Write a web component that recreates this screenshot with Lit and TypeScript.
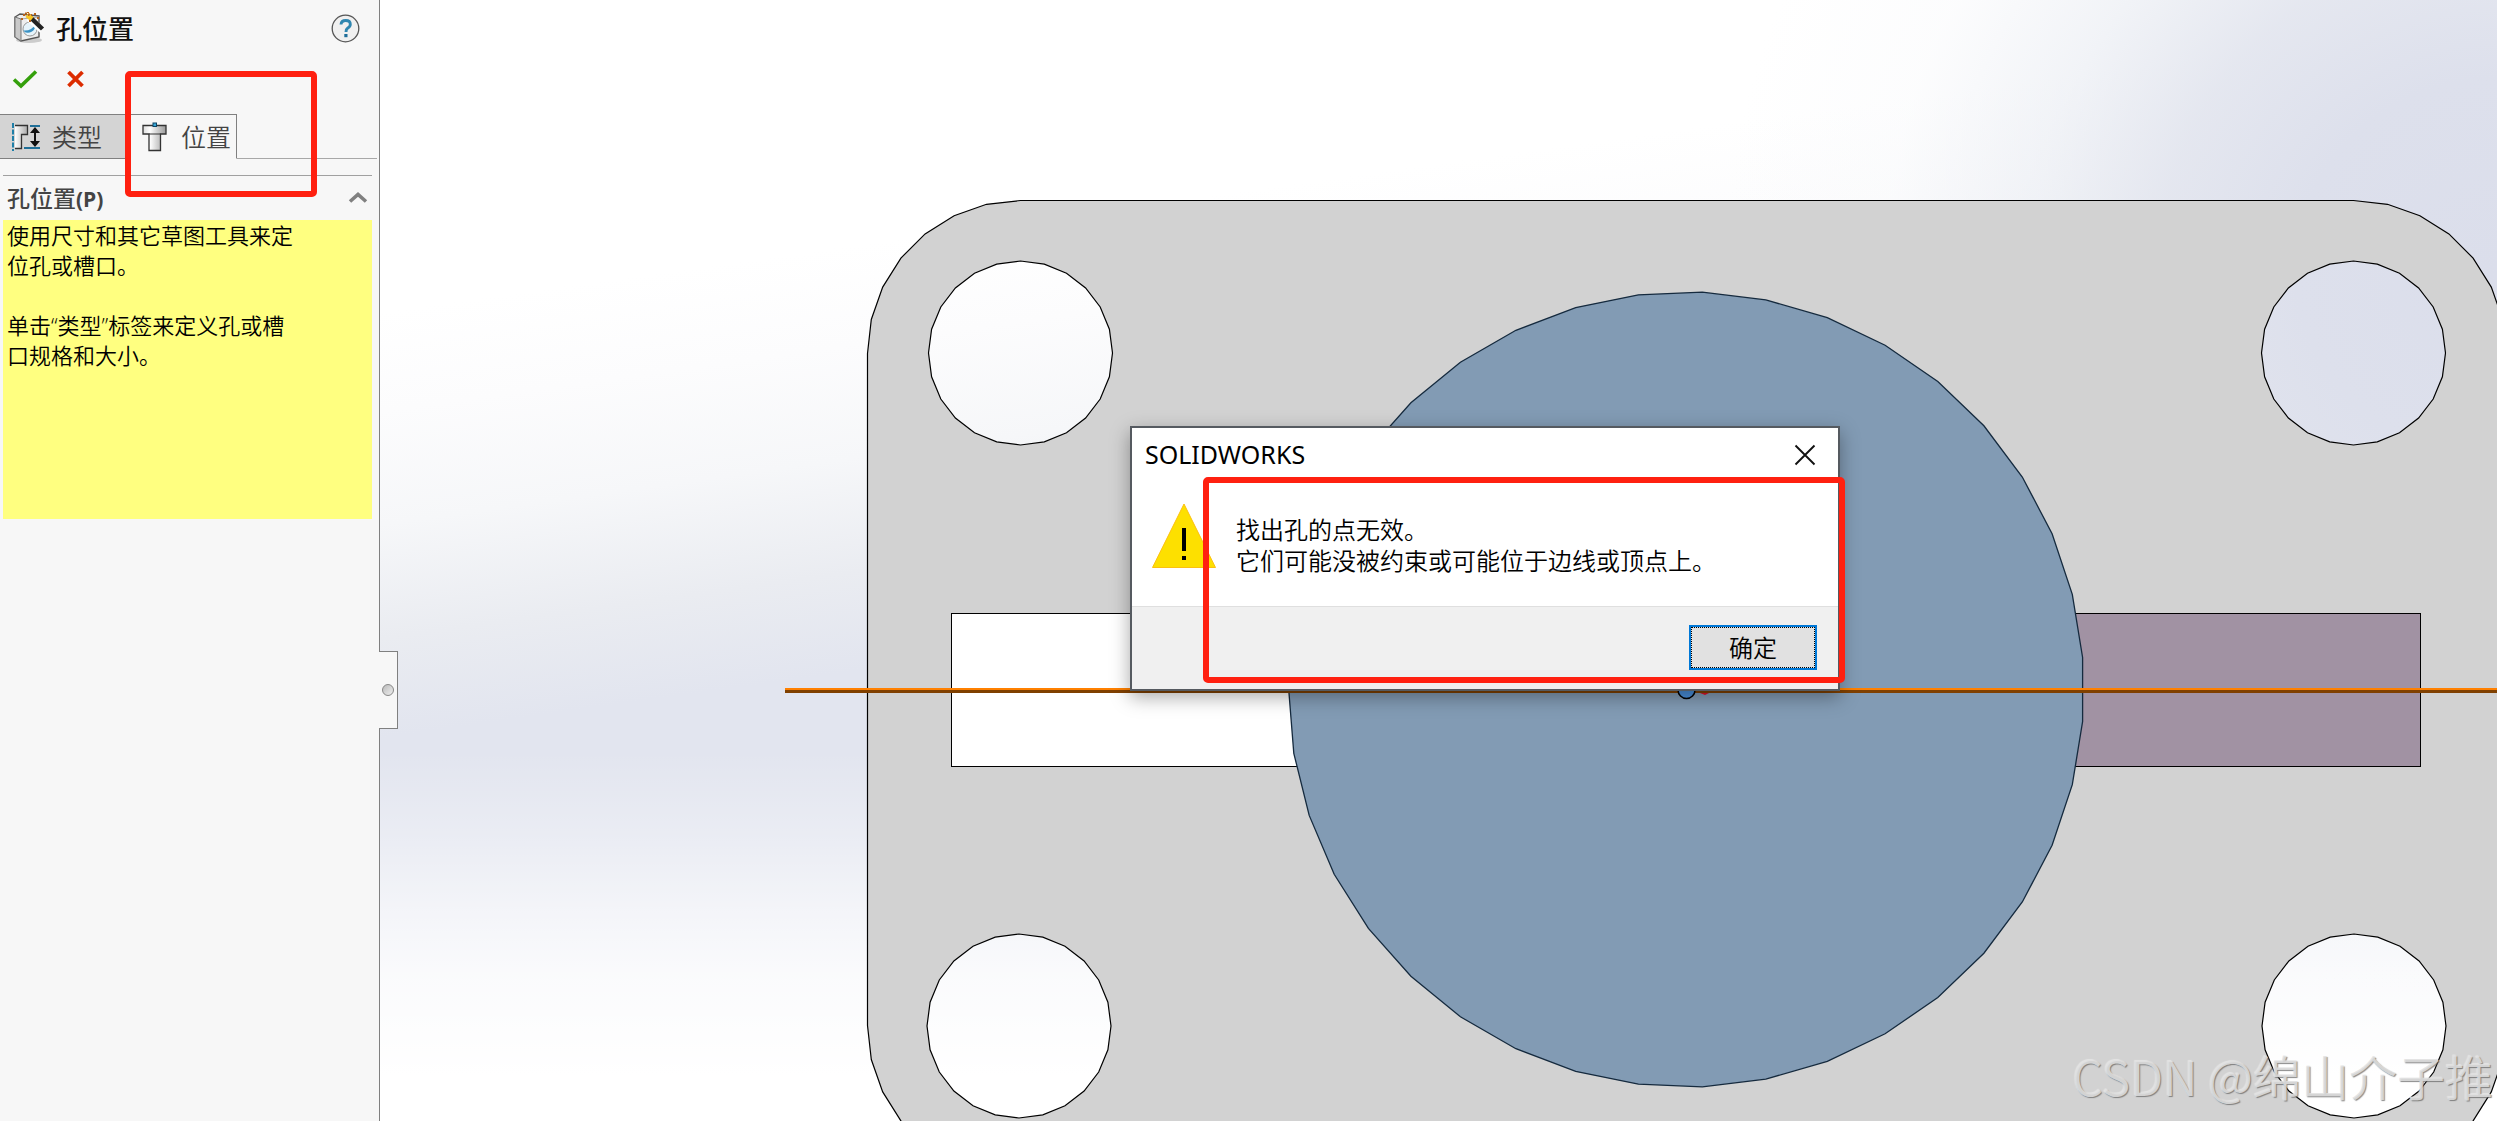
import { LitElement, html, svg, css } from "lit";
import { customElement } from "lit/decorators.js";

const polygon = (cx: number, cy: number, r: number, n: number, startDeg = 0): string =>
  Array.from({ length: n }, (_, i) => {
    const a = ((startDeg + (360 / n) * i) * Math.PI) / 180;
    return `${(cx + r * Math.cos(a)).toFixed(1)},${(cy + r * Math.sin(a)).toFixed(1)}`;
  }).join(" ");

const corner = (cx: number, cy: number, r: number, from: number): string[] =>
  Array.from({ length: 8 }, (_, i) => {
    const a = ((from + (90 / 7) * i) * Math.PI) / 180;
    return `${(cx + r * Math.cos(a)).toFixed(1)},${(cy + r * Math.sin(a)).toFixed(1)}`;
  });

const LEFT = 1020.5;
const RIGHT = 2353.5;
const TOP = 353.5;
const BOTTOM = 1025.5;

const HOLES: Array<[number, number]> = [
  [LEFT, 353],
  [RIGHT, 353],
  [1019, 1026],
  [2354, 1026],
];

const PLATE =
  "M" +
  [
    ...corner(LEFT, TOP, 153, 180),
    ...corner(RIGHT, TOP, 153, 270),
    ...corner(RIGHT, BOTTOM, 153, 0),
    ...corner(LEFT, BOTTOM, 153, 90),
  ].join("L") +
  "Z" +
  HOLES.map(([x, y]) => "M" + polygon(x, y, 92, 24).split(" ").join("L") + "Z").join("");

@customElement("model-view")
export class ModelView extends LitElement {
  static styles = css`
    :host {
      display: block;
      overflow: hidden;
      background:
        radial-gradient(ellipse 38% 68% at 100% 24%, #dbdeeb 0%, #dde0ec 25%, rgba(224, 227, 237, 0.85) 42%, rgba(234, 237, 243, 0.65) 58%, rgba(248, 249, 251, 0.4) 76%, rgba(255, 255, 255, 0) 96%),
        linear-gradient(180deg, rgba(255, 255, 255, 0) 67%, rgba(255, 255, 255, 0.3) 75%, rgba(255, 255, 255, 0.6) 81%, rgba(255, 255, 255, 0.84) 87%, #fff 96%),
        linear-gradient(172deg, #fff 22%, #fcfcfd 29%, #f6f7f9 37%, #eaecf1 45%, #e2e5ef 52%);
    }
    .drawing {
      display: block;
      width: 100%;
      height: 100%;
    }
  `;

  render() {
    return html`
      <svg class="drawing" viewBox="380 0 2117 1121" preserveAspectRatio="xMidYMid slice" aria-hidden="true">
        <path d=${PLATE} fill="#d2d2d2" fill-rule="evenodd" stroke="#000" stroke-width="1.2" />
        <rect x="951.5" y="613.5" width="500" height="153" fill="#fff" stroke="#000" />
        <rect x="1900.5" y="613.5" width="520" height="153" fill="#a192a3" stroke="#000" />
        <polygon points=${polygon(1686.3, 689.5, 397.6, 39, 180)} fill="#829bb4" stroke="#152a3e" stroke-width="1.3" />
        ${svg`<path d="M785 689H2497" stroke="#ff8000" stroke-width="2" />
        <path d="M785 691.5H2497" stroke="#804000" stroke-width="3" />
        <circle cx="1686.5" cy="690" r="8.5" fill="#4a90dc" stroke="#000" stroke-width="1.5" />
        <path d="M1700 693h9l-4 2z" fill="#e0102a" />`}
      </svg>
    `;
  }
}

@customElement("property-panel")
export class PropertyPanel extends LitElement {
  static styles = css`
    :host {
      display: block;
      box-sizing: border-box;
      background: #f7f7f7;
      border-right: 1px solid #808080;
      color: #444;
    }
    button {
      border: 0;
      padding: 0;
      background: none;
      font: inherit;
      color: inherit;
      display: block;
    }
    svg {
      display: block;
    }
    .head {
      display: flex;
      align-items: center;
      height: 57px;
      padding: 0 19px 0 12px;
      gap: 10px;
    }
    .title {
      flex: 1;
      margin: 0;
      font-size: 26px;
      line-height: 36px;
      font-weight: 500;
      color: #111;
    }
    .actions {
      display: flex;
      align-items: flex-start;
      gap: 26px;
      height: 57px;
      padding: 11px 12px 0;
      box-sizing: border-box;
    }
    .tabs {
      display: flex;
      margin-right: 2px;
      height: 45px;
    }
    .tab {
      display: flex;
      align-items: center;
      gap: 11px;
      box-sizing: border-box;
      padding: 0 6px 0 11px;
      border-top: 1px solid #808080;
      border-bottom: 1px solid #808080;
      background: #d4d4d4;
      font-size: 25px;
      font-weight: 350;
      line-height: 32px;
      width: 126px;
    }
    .tab.current {
      background: #f7f7f7;
      border-bottom-color: transparent;
      border-right: 1px solid #808080;
      width: 111px;
      padding: 0 4px 0 16px;
    }
    .rest {
      flex: 1;
      border-bottom: 1px solid #a8a8a8;
    }
    .section {
      margin: 16px 7px 0 3px;
      border-top: 1px solid #a0a0a0;
    }
    .bar {
      display: flex;
      align-items: center;
      justify-content: space-between;
      width: 100%;
      height: 44px;
      padding: 1px 4px 0;
      box-sizing: border-box;
    }
    .label {
      font-size: 23px;
      line-height: 32px;
      font-weight: 500;
    }
    .label b {
      font-size: 21px;
      font-weight: 700;
    }
    .message {
      background: #ffff80;
      color: #000;
      min-height: 299px;
      padding: 0 4px;
      box-sizing: border-box;
      font-size: 22px;
      font-weight: 350;
      line-height: 30px;
    }
    .message p {
      margin: 0 0 30px;
    }
  `;

  render() {
    return html`
      <header class="head">
        <svg width="34" height="34" viewBox="0 0 34 34" aria-hidden="true">
          <ellipse cx="17" cy="28" rx="13" ry="3" fill="#ccc" />
          <path d="M3 5 8 2 27 4V25L9 29 3 25Z" fill="#eee" stroke="#555" stroke-width="1.4" />
          <path d="M3 5 9 7 9 29 3 25Z" fill="#c9c9c9" stroke="#777" />
          <path d="M9 7 27 5" stroke="#aaa" />
          <circle cx="18" cy="17" r="7" fill="#e6f4fb" stroke="#999" />
          <path d="M11.5 18.500Q20 19 23 12.500A7 7 0 0 1 11.500 19Z" fill="#3b92c4" />
          <path d="M17 6 30 18" stroke="#fff" stroke-width="7" />
          <path d="M18 5 30.500 17" stroke="#222" stroke-width="4.500" />
          <path d="M15 3 20 7" stroke="#f7c625" stroke-width="5" />
          <path d="M11 3h3v-3h3v3h3M22 2h3M25 6h3M9 7h2M17 9h2" stroke="#b8641c" stroke-width="2" stroke-dasharray="2 1.500" fill="none" />
        </svg>
        <h1 class="title">孔位置</h1>
        <button aria-label="帮助">
          <svg width="29" height="29" viewBox="0 0 29 29">
            <circle cx="14.500" cy="14.500" r="13.300" fill="#f0f0f0" stroke="#555" stroke-width="1.300" />
            <path d="M10 10.500Q10.300 6.500 14.700 6.500Q19.300 6.500 19.300 10.200Q19.300 12.500 16.800 14Q15 15.200 15 18" fill="none" stroke="#2f86b0" stroke-width="2.900" />
            <rect x="13.300" y="20" width="3.200" height="3.200" fill="#1d6d99" />
          </svg>
        </button>
      </header>
      <div class="actions">
        <button aria-label="确定">
          <svg width="26" height="24" viewBox="0 0 26 24"><path d="M2 11.500 9 18 24 3.500" fill="none" stroke="#35a00c" stroke-width="3.600" /></svg>
        </button>
        <button aria-label="取消">
          <svg width="24" height="24" viewBox="0 0 24 24"><path d="M4.500 4 18.500 18M18.500 4 4.500 18" stroke="#dc2c00" stroke-width="3.800" /></svg>
        </button>
      </div>
      <div class="tabs" role="tablist">
        <button class="tab" role="tab" aria-selected="false">
          <svg width="30" height="30" viewBox="0 0 30 30">
            <defs><linearGradient id="m" x2="1"><stop stop-color="#fff" /><stop offset="1" stop-color="#aaa" /></linearGradient></defs>
            <path d="M2 1V29" stroke="#1f7fa8" stroke-width="2" stroke-dasharray="5 1.500" />
            <path d="M4 3.500H16.500V12.500H10.500V26.500H4" fill="url(#m)" stroke="#333" stroke-width="1.300" />
            <path d="M19 4H29M13 26H29" stroke="#1f6f98" stroke-width="2" />
            <path d="M24 8V22" stroke="#111" stroke-width="2" />
            <path d="M24 5 29 11H19ZM24 25 29 19H19Z" fill="#111" />
          </svg>
          类型
        </button>
        <button class="tab current" role="tab" aria-selected="true">
          <svg width="28" height="30" viewBox="0 0 28 30">
            <defs><linearGradient id="n" x2="1"><stop stop-color="#ddd" /><stop offset=".3" stop-color="#fff" /><stop offset="1" stop-color="#999" /></linearGradient></defs>
            <path d="M1 3.500H24V12H18.500V28.500H7V12H1Z" fill="url(#n)" stroke="#333" stroke-width="1.300" />
            <path d="M7 12H18.500" stroke="#333" />
            <rect x="11" y="1" width="3.500" height="3.500" fill="#38a6d6" stroke="#0d4565" />
          </svg>
          位置
        </button>
        <span class="rest"></span>
      </div>
      <section class="section">
        <button class="bar" aria-expanded="true">
          <span class="label">孔位置<b>(P)</b></span>
          <svg width="20" height="14" viewBox="0 0 20 14"><path d="M2 9.500 10 2.500 18 9.500" fill="none" stroke="#808080" stroke-width="3.600" /></svg>
        </button>
        <div class="message">
          <p>使用尺寸和其它草图工具来定<br />位孔或槽口。</p>
          <p>单击“类型”标签来定义孔或槽<br />口规格和大小。</p>
        </div>
      </section>
    `;
  }
}

@customElement("alert-dialog")
export class AlertDialog extends LitElement {
  static styles = css`
    :host {
      display: block;
      box-sizing: border-box;
      border: 2px solid #555a60;
      background: #fff;
      color: #000;
      box-shadow: 0 6px 18px rgba(0, 0, 0, 0.35);
    }
    .titlebar {
      display: flex;
      align-items: center;
      justify-content: space-between;
      height: 54px;
      padding: 0 18px 0 13px;
    }
    .name {
      margin: 0;
      padding-bottom: 2px;
      font-size: 25px;
      line-height: 34px;
      font-weight: 400;
      font-family: "Noto Sans", "Open Sans", sans-serif;
    }
    svg {
      display: block;
    }
    .close {
      padding: 4px;
      border: 0;
      background: none;
    }
    .body {
      display: flex;
      gap: 20px;
      height: 124px;
      box-sizing: border-box;
      padding: 22px 20px 0;
    }
    .text {
      margin: 0;
      padding-top: 10px;
      font-size: 24px;
      font-weight: 350;
      line-height: 31px;
    }
    .footer {
      display: flex;
      justify-content: flex-end;
      background: #f0f0f0;
      border-top: 1px solid #dfdfdf;
      padding: 18px 21px 19px;
    }
    .ok {
      width: 128px;
      height: 45px;
      padding: 0;
      border: 2px solid #0078d7;
      background: #e1e1e1;
      outline: 1px dotted #000;
      outline-offset: -3px;
      font: inherit;
      font-size: 24px;
      font-weight: 350;
      line-height: 32px;
      color: #000;
    }
  `;

  render() {
    return html`
      <div class="titlebar">
        <h2 class="name">SOLIDWORKS</h2>
        <button class="close" aria-label="关闭">
          <svg width="22" height="22" viewBox="0 0 22 22"><path d="M1.500 1.500 20.500 20.500M20.500 1.500 1.500 20.500" stroke="#111" stroke-width="1.900" /></svg>
        </button>
      </div>
      <div class="body">
        <svg width="64" height="66" viewBox="0 0 64 66" aria-hidden="true">
          <path d="M32 0 63.500 63.500H.5Z" fill="#fde000" stroke="#fbc010" />
          <path d="M30 24h4v23h-4zM30 52h4v4h-4z" fill="#000" />
        </svg>
        <p class="text">找出孔的点无效。<br />它们可能没被约束或可能位于边线或顶点上。</p>
      </div>
      <div class="footer"><button class="ok">确定</button></div>
    `;
  }
}

@customElement("app-root")
export class AppRoot extends LitElement {
  static styles = css`
    :host {
      display: grid;
      grid-template-columns: 380px 1fr;
      position: relative;
      height: 100vh;
      overflow: hidden;
      font-family: "Open Sans", "Noto Sans CJK SC", sans-serif;
    }
    .splitter {
      position: absolute;
      left: 379px;
      top: 651px;
      width: 19px;
      height: 78px;
      box-sizing: border-box;
      padding: 0;
      display: flex;
      align-items: center;
      justify-content: center;
      background: #f7f7f7;
      border: 1px solid #808080;
      border-left: 0;
    }
    .knob {
      width: 12px;
      height: 12px;
      box-sizing: border-box;
      border: 1px solid #888;
      border-radius: 50%;
      background: linear-gradient(135deg, #bbb, #eee);
    }
    .dialog {
      position: absolute;
      left: 1130px;
      top: 426px;
      width: 710px;
    }
    .mark {
      position: absolute;
      box-sizing: border-box;
      border: 6px solid #ff2010;
      border-radius: 5px;
      pointer-events: none;
    }
    .mark-tab {
      left: 125px;
      top: 71px;
      width: 192px;
      height: 126px;
    }
    .mark-text {
      left: 1203px;
      top: 477px;
      width: 642px;
      height: 206px;
    }
    .watermark {
      position: absolute;
      right: 4px;
      bottom: 11px;
      font-family: "Noto Sans CJK SC", sans-serif;
      font-size: 48px;
      line-height: 70px;
      font-weight: 350;
      white-space: nowrap;
      color: rgba(226, 226, 226, 0.85);
      text-shadow: 1px 1px 1px rgba(100, 100, 100, 0.75), -1px -1px 1px rgba(255, 255, 255, 0.4);
    }
  `;

  render() {
    return html`
      <property-panel></property-panel>
      <model-view></model-view>
      <button class="splitter" aria-label="折叠面板"><span class="knob"></span></button>
      <alert-dialog class="dialog" role="alertdialog" aria-label="SOLIDWORKS"></alert-dialog>
      <div class="mark mark-tab"></div>
      <div class="mark mark-text"></div>
      <div class="watermark">CSDN @绵山介子推</div>
    `;
  }
}
